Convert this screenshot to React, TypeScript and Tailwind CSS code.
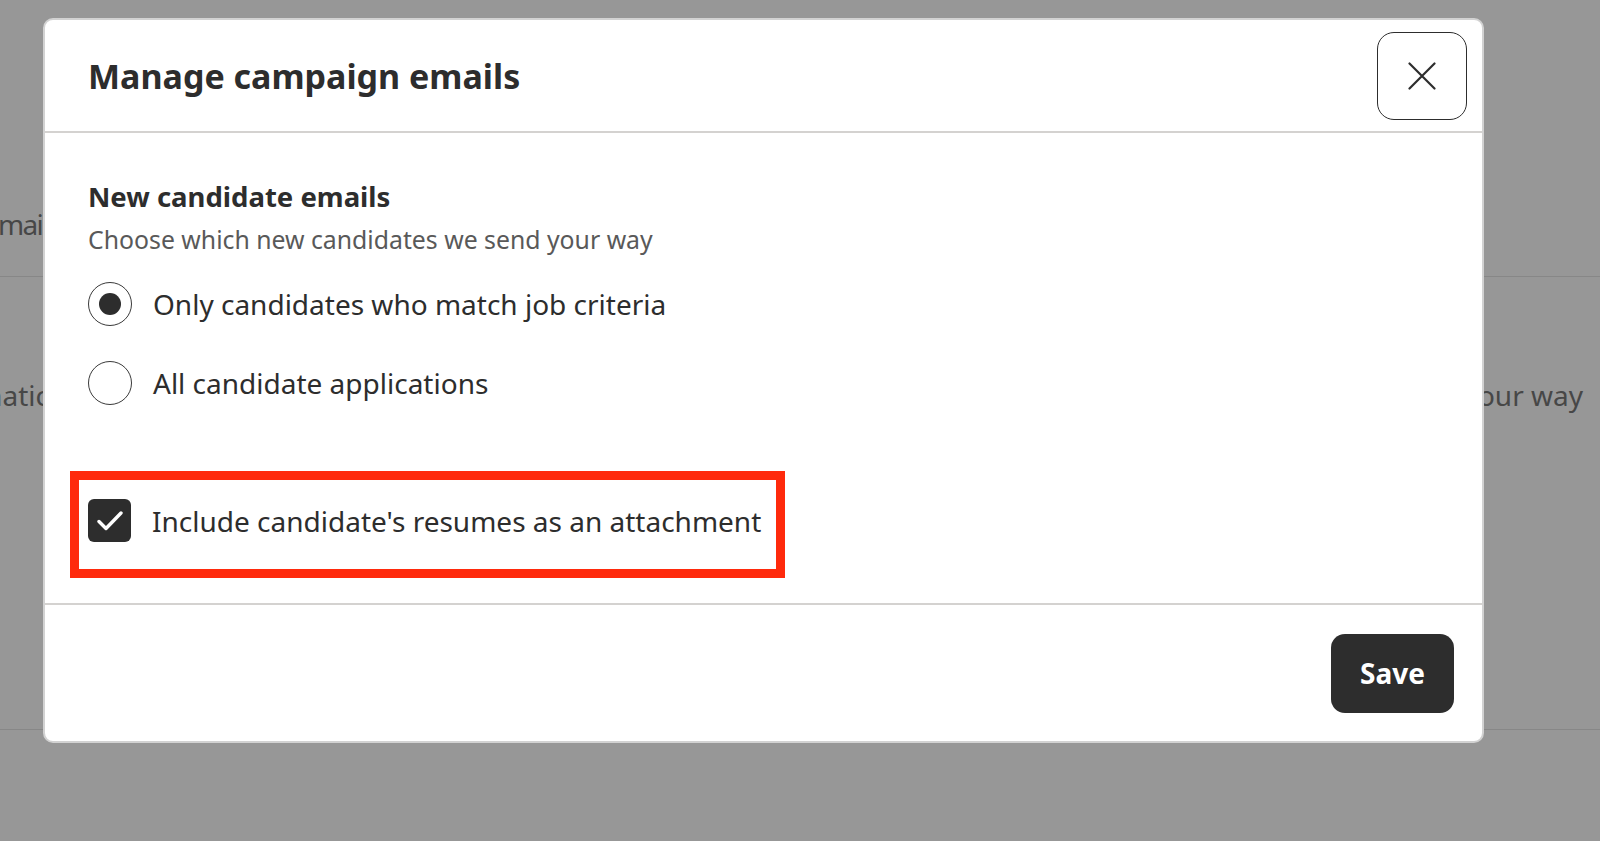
import { useState } from "react";

const font = { fontFamily: '"Noto Sans", "Open Sans", Arial, sans-serif' };

const CloseIcon = () => (
  <svg width="28" height="28" viewBox="0 0 28 28" fill="none" stroke="#2d2d2d" strokeWidth="2.2" strokeLinecap="round">
    <path d="M1.5 1.5l25 25M26.5 1.5l-25 25" />
  </svg>
);

const CheckIcon = () => (
  <svg width="26" height="26" viewBox="0 0 26 26" fill="none" stroke="#ffffff" strokeWidth="3.4" strokeLinecap="round" strokeLinejoin="round">
    <path d="M2 13.5l7 7L24 5" />
  </svg>
);

const Radio = ({ checked, label, onClick }: { checked: boolean; label: string; onClick: () => void }) => (
  <button onClick={onClick} className="flex items-center gap-[21px] text-left">
    <span className="flex h-[44px] w-[44px] shrink-0 items-center justify-center rounded-full border-[1.5px] border-[#3a3a3a] bg-white">
      {checked && <span className="h-[22px] w-[22px] rounded-full bg-[#2d2d2d]" />}
    </span>
    <span className="text-[28px] leading-[36px] text-[#2d2d2d]">{label}</span>
  </button>
);

export default function App() {
  const [choice, setChoice] = useState("match");
  const [attach, setAttach] = useState(true);

  return (
    <div style={font} className="relative h-[841px] w-full overflow-hidden bg-[#979797] text-[#2d2d2d]">
      {/* dimmed page behind the dialog */}
      <div className="h-[277px] border-b border-[#878787] pt-[206px]">
        <div className="-ml-[16px] whitespace-nowrap text-[28px] leading-[36px] tracking-[-0.06em] text-[#474747]">Email settings</div>
      </div>
      <div className="flex h-[453px] items-start justify-between border-b border-[#878787] pt-[100px]">
        <div className="-ml-[86px] whitespace-nowrap text-[28px] leading-[36px] text-[#474747]">Automatic emails</div>
        <div className="whitespace-nowrap pr-[17px] text-[28px] leading-[36px] text-[#474747]">
          Choose which new candidates we send your way
        </div>
      </div>

      {/* dialog */}
      <div className="absolute left-[43px] top-[18px] w-[1441px] overflow-hidden rounded-[10px] border-2 border-[#d2d2d2] bg-white">
        <div className="flex h-[113px] items-center justify-between border-b-2 border-[#d4d2d0] pl-[43px] pr-[15px]">
          <h1 className="text-[34px] font-bold leading-[44px]">Manage campaign emails</h1>
          <button className="flex h-[88px] w-[90px] items-center justify-center rounded-[17px] border-[1.5px] border-[#2d2d2d] bg-white">
            <CloseIcon />
          </button>
        </div>

        <div className="border-b-2 border-[#d4d2d0] pb-[25px] pl-[43px] pt-[46px]">
          <h2 className="text-[27.5px] font-bold leading-[36px]">New candidate emails</h2>
          <p className="mt-[8px] text-[24.8px] leading-[32px] text-[#595959]">
            Choose which new candidates we send your way
          </p>
          <div className="mt-[27px] flex flex-col gap-[35px]">
            <Radio checked={choice === "match"} label="Only candidates who match job criteria" onClick={() => setChoice("match")} />
            <Radio checked={choice === "all"} label="All candidate applications" onClick={() => setChoice("all")} />
          </div>
          <div className="-ml-[18px] mt-[66px] w-fit border-[9px] border-[#ff2a0c] pb-[27px] pl-[9px] pr-[15px] pt-[19px]">
            <button onClick={() => setAttach(!attach)} className="flex items-center gap-[21px] text-left">
              <span className="flex h-[43px] w-[43px] items-center justify-center rounded-[6px] bg-[#2d2d2d]">
                {attach && <CheckIcon />}
              </span>
              <span className="text-[28px] leading-[36px]">Include candidate's resumes as an attachment</span>
            </button>
          </div>
        </div>

        <div className="flex h-[136px] items-center justify-end pr-[28px]">
          <button className="flex h-[79px] w-[123px] items-center justify-center rounded-[14px] bg-[#2d2d2d] text-[28px] font-bold text-white">
            Save
          </button>
        </div>
      </div>
    </div>
  );
}
